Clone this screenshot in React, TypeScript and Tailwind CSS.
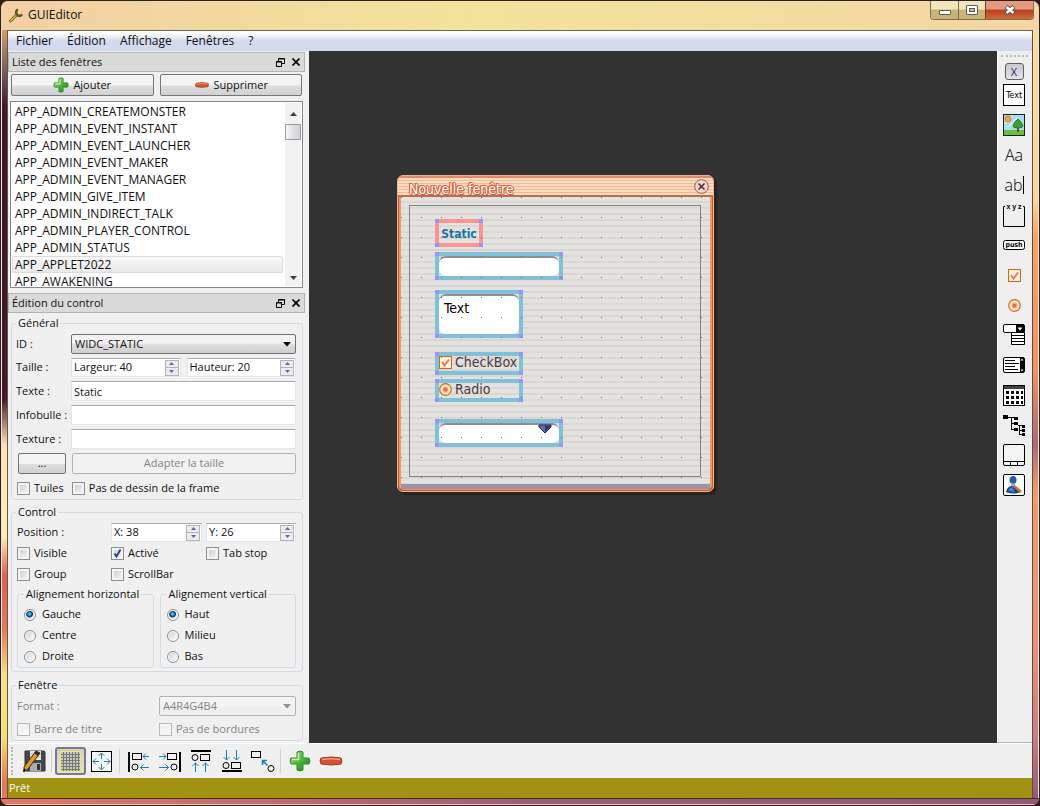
import { useState, type ReactNode } from 'react'
import clsx from 'clsx'

const windows = [
  'APP_ADMIN_CREATEMONSTER',
  'APP_ADMIN_EVENT_INSTANT',
  'APP_ADMIN_EVENT_LAUNCHER',
  'APP_ADMIN_EVENT_MAKER',
  'APP_ADMIN_EVENT_MANAGER',
  'APP_ADMIN_GIVE_ITEM',
  'APP_ADMIN_INDIRECT_TALK',
  'APP_ADMIN_PLAYER_CONTROL',
  'APP_ADMIN_STATUS',
  'APP_APPLET2022',
  'APP_AWAKENING',
]

const menus = ['Fichier', 'Édition', 'Affichage', 'Fenêtres', '?']

/* ---------- icons ---------- */

function PlusIcon({ className }: { className?: string }) {
  return (
    <svg viewBox="0 0 22 22" className={className} aria-hidden="true">
      <defs>
        <linearGradient id="plus" x1="0" y1="0" x2="1" y2="1">
          <stop offset="0" stopColor="#9fe07c" />
          <stop offset="0.5" stopColor="#4fb83a" />
          <stop offset="1" stopColor="#1c7a1c" />
        </linearGradient>
      </defs>
      <path
        d="M8 2q3-2 6 0v6h6q2 3 0 6h-6v6q-3 2-6 0v-6H2q-2-3 0-6h6z"
        fill="url(#plus)"
        stroke="#2f8a2a"
      />
      <path d="M9.500 3v6.500H3" fill="none" stroke="#c8f0b0" strokeWidth="1.500" />
    </svg>
  )
}

function MinusIcon({ className }: { className?: string }) {
  return (
    <svg viewBox="0 0 24 10" className={className} aria-hidden="true">
      <path
        d="M2 2q10-2 20 0 2 3 0 6-10 2-20 0-2-3 0-6z"
        fill="#d2532f"
        stroke="#a8391b"
      />
      <path d="M3 3.500q9-1.500 18 0" fill="none" stroke="#f29a78" strokeWidth="1.500" />
    </svg>
  )
}

function WrenchIcon() {
  return (
    <svg viewBox="0 0 16 16" className="size-4" aria-hidden="true">
      <path
        d="M2.500 14L9 7.500"
        stroke="#7a6a1c"
        strokeWidth="3"
        strokeLinecap="round"
      />
      <path
        d="M2.500 14L9 7.500"
        stroke="#d8b64a"
        strokeWidth="1.300"
        strokeLinecap="round"
      />
      <path
        d="M9 3Q7 6 9 8t4.500 0"
        fill="none"
        stroke="#5f5a1c"
        strokeWidth="2.400"
        strokeLinecap="round"
      />
    </svg>
  )
}

function SaveIcon() {
  return (
    <svg viewBox="0 0 24 24" className="size-6" aria-hidden="true">
      <path d="M3 2h19l1 1v19H4l-1-1z" fill="#474747" stroke="#333" />
      <path d="M8 2h11v9H8z" fill="#e4e9ee" />
      <path d="M8 5h11M8 8h11" stroke="#b9c3cc" />
      <path d="M8 14h11v8H8z" fill="#a9adb2" />
      <path d="M15 15h3v6h-3z" fill="#333" />
      <path d="M14 2l4 2L6 20l-4 3 0-5z" fill="#e79a2c" stroke="#3b2a10" />
      <path d="M14 2l4 2-2 3-4-3z" fill="#2a2a2a" />
      <path d="M2 19l2 2-3 2z" fill="#111" />
    </svg>
  )
}

function GridIcon() {
  return (
    <svg viewBox="0 0 21 21" className="size-[21px]" shapeRendering="crispEdges" aria-hidden="true">
      <rect width="21" height="21" fill="#f1ea5a" />
      <rect x="1" y="1" width="19" height="19" fill="#c9c9c4" />
      <path
        d="M3.500 1v19M6.500 1v19M9.500 1v19M12.500 1v19M15.500 1v19M18.500 1v19M1 3.500h19M1 6.500h19M1 9.500h19M1 12.500h19M1 15.500h19M1 18.500h19"
        stroke="#77777a"
      />
    </svg>
  )
}

function FitIcon() {
  return (
    <svg viewBox="0 0 21 21" className="size-[21px]" fill="none" aria-hidden="true">
      <rect x="0.500" y="0.500" width="20" height="20" fill="#f7f7f7" stroke="#000" />
      <path
        d="M10.500 2v6M10.500 13v6M2 10.500h6M13 10.500h6M7.500 5l3-3 3 3M7.500 16l3 3 3-3M5 7.500l-3 3 3 3M16 7.500l3 3-3 3"
        stroke="#1d7fae"
      />
    </svg>
  )
}

function AlignLeftIcon() {
  return (
    <svg viewBox="0 0 22 21" className="h-[21px] w-[22px]" fill="none" aria-hidden="true">
      <path d="M1 1v20" stroke="#000" strokeWidth="2" />
      <rect x="4.500" y="2.500" width="9" height="6" stroke="#000" />
      <circle cx="7" cy="16" r="3" stroke="#000" />
      <path d="M15 5.500h6M18 2.500l-3 3 3 3M12 16.500h9M15.500 13.500l-3 3 3 3" stroke="#1d7fae" />
    </svg>
  )
}

function AlignRightIcon() {
  return (
    <svg viewBox="0 0 22 21" className="h-[21px] w-[22px]" fill="none" aria-hidden="true">
      <path d="M21 1v20" stroke="#000" strokeWidth="2" />
      <rect x="8.500" y="2.500" width="9" height="6" stroke="#000" />
      <circle cx="15" cy="16" r="3" stroke="#000" />
      <path d="M0 5.500h7M4 2.500l3 3-3 3M0 16.500h10M6.500 13.500l3 3-3 3" stroke="#1d7fae" />
    </svg>
  )
}

function AlignTopIcon() {
  return (
    <svg viewBox="0 0 22 22" className="size-[22px]" fill="none" aria-hidden="true">
      <path d="M1 1h20" stroke="#000" strokeWidth="2" />
      <circle cx="5" cy="7.500" r="3" stroke="#000" />
      <rect x="10.500" y="4.500" width="9" height="6" stroke="#000" />
      <path d="M5.500 12.500V22M2.500 16l3-3 3 3M15.500 12.500V22M12.500 16l3-3 3 3" stroke="#1d7fae" />
    </svg>
  )
}

function AlignBottomIcon() {
  return (
    <svg viewBox="0 0 22 22" className="size-[22px]" fill="none" aria-hidden="true">
      <path d="M1 21h20" stroke="#000" strokeWidth="2" />
      <circle cx="5" cy="15.500" r="3" stroke="#000" />
      <rect x="10.500" y="12.500" width="9" height="6" stroke="#000" />
      <path d="M5.500 0v10M2.500 7l3 3 3-3M15.500 0v10M12.500 7l3 3 3-3" stroke="#1d7fae" />
    </svg>
  )
}

function MoveIcon() {
  return (
    <svg viewBox="0 0 24 22" className="h-[22px] w-6" fill="none" aria-hidden="true">
      <rect x="0.500" y="1.500" width="9" height="6" stroke="#000" />
      <circle cx="20" cy="18.500" r="3" stroke="#000" />
      <path d="M11.500 15v-4.500H16M11.500 10.500l5 5" stroke="#1d7fae" strokeWidth="1.500" />
    </svg>
  )
}

function TextToolIcon() {
  return (
    <svg viewBox="0 0 22 22" className="size-[22px]" aria-hidden="true">
      <rect x="0.500" y="0.500" width="21" height="21" fill="#fff" stroke="#000" />
      <text x="11" y="14" textAnchor="middle" fontSize="9" fontFamily="DejaVu Sans Condensed, sans-serif">
        Text
      </text>
    </svg>
  )
}

function PictureIcon() {
  return (
    <svg viewBox="0 0 22 22" className="size-[22px]" aria-hidden="true">
      <rect x="0.500" y="0.500" width="21" height="21" fill="#a9def2" stroke="#123" />
      <path d="M1 16h20v5H1z" fill="#6bbf3c" />
      <path d="M2 9l7-7M5 13l9-9" stroke="#d4f1fb" strokeWidth="1.500" />
      <circle cx="5" cy="5" r="3" fill="#f4a14a" stroke="#e07b2d" />
      <path d="M15 12v6" stroke="#7a4a1c" strokeWidth="2" />
      <path d="M15 5q4 3 5 7 0 2-5 2t-5-2q1-4 5-7z" fill="#3f9b35" stroke="#2b7426" />
    </svg>
  )
}

function GroupToolIcon() {
  return (
    <svg viewBox="0 0 22 25" className="h-[25px] w-[22px]" fill="none" aria-hidden="true">
      <path d="M2 3.500H.5v20h21v-20H20" stroke="#000" />
      <text
        x="11"
        y="6"
        fill="#000"
        textAnchor="middle"
        fontSize="7"
        fontWeight="700"
        fontFamily="Liberation Sans, sans-serif"
      >
        x y z
      </text>
    </svg>
  )
}

function PushIcon() {
  return (
    <svg viewBox="0 0 22 10" className="h-2.5 w-[22px]" aria-hidden="true">
      <rect x="0.500" y="0.500" width="21" height="9" rx="2" fill="#fff" stroke="#000" />
      <text
        x="11"
        y="7"
        textAnchor="middle"
        fontSize="7"
        fontWeight="700"
        fontFamily="DejaVu Sans Condensed, sans-serif"
      >
        push
      </text>
    </svg>
  )
}

function OrangeCheck() {
  return (
    <svg viewBox="0 0 13 13" className="size-[13px] shrink-0" aria-hidden="true">
      <rect x="0.500" y="0.500" width="12" height="12" fill="#fdf0b0" stroke="#d4622c" />
      <rect x="2" y="2" width="9" height="9" fill="#fff6e4" />
      <path d="M3 6l2.500 3.500L10 3.500" fill="none" stroke="#ee7466" strokeWidth="2" />
    </svg>
  )
}

function OrangeRadio() {
  return (
    <svg viewBox="0 0 13 13" className="size-[13px] shrink-0" aria-hidden="true">
      <circle cx="6.500" cy="6.500" r="5.800" fill="#fdf0b0" stroke="#d9622f" strokeWidth="1.200" />
      <circle cx="6.500" cy="6.500" r="3.500" fill="#fbd9b4" />
      <circle cx="6.500" cy="6.500" r="2.300" fill="#e66a54" />
    </svg>
  )
}

function ComboToolIcon() {
  return (
    <svg viewBox="0 0 22 22" className="size-[22px]" aria-hidden="true">
      <rect x="0.500" y="0.500" width="21" height="8" rx="1.500" fill="#fff" stroke="#000" />
      <path d="M13 0h8v9h-8z" />
      <path d="M14.500 3.500h5L17 6.500z" fill="#fff" />
      <path d="M8.500 8.500h13v12h-13z" fill="#fff" stroke="#000" />
      <path d="M8 11.500h13M8 14.500h13M8 17.500h13" stroke="#000" />
    </svg>
  )
}

function ListToolIcon() {
  return (
    <svg viewBox="0 0 22 16" className="h-4 w-[22px]" aria-hidden="true">
      <rect x="0.500" y="0.500" width="21" height="15" rx="1.500" fill="#fff" stroke="#000" />
      <path d="M2 3.500h10M2 6.500h14M2 9.500h10M2 12.500h13" stroke="#000" />
      <path d="M17 1h4v14h-4z" />
      <path d="M17.500 3.500L19 1.500l1.500 2zM17.500 12.500l1.500 2 1.500-2z" fill="#fff" />
    </svg>
  )
}

function CalendarIcon() {
  return (
    <svg viewBox="0 0 22 21" className="h-[21px] w-[22px]" aria-hidden="true">
      <rect x="0.500" y="0.500" width="21" height="20" fill="#fff" stroke="#000" />
      <path d="M1 1h20v3H1z" fill="#444" />
      <path
        d="M3 7.500h17M3 12.500h17M3 17.500h17"
        stroke="#000"
        strokeWidth="3"
        strokeDasharray="3 2"
      />
    </svg>
  )
}

function TreeIcon() {
  return (
    <svg viewBox="0 0 22 22" className="size-[22px]" shapeRendering="crispEdges" aria-hidden="true">
      <path d="M0 1h5v4H0zM11 3h4v3h-4zM11 8h4v3h-4zM11 14h4v3h-4zM19 11h3v3h-3zM19 15h3v3h-3zM19 19h3v3h-3z" />
      <path
        d="M5 3.500h6M8.500 3.500v12H11M8 9.500h3M15 11.500h4M16.500 11.500v9H19M16 16.500h3"
        fill="none"
        stroke="#000"
      />
    </svg>
  )
}

function TabToolIcon() {
  return (
    <svg viewBox="0 0 22 22" className="size-[22px]" fill="none" stroke="#000" aria-hidden="true">
      <rect x="0.500" y="0.500" width="21" height="21" rx="1.500" fill="#f5f5f5" />
      <path d="M1 17.500h20M7.500 17.500V21M14.500 17.500V21" />
    </svg>
  )
}

function UserIcon() {
  return (
    <svg viewBox="0 0 22 22" className="size-[22px]" aria-hidden="true">
      <rect x="0.500" y="0.500" width="21" height="21" rx="1.500" fill="#fff" stroke="#000" />
      <ellipse cx="10" cy="6" rx="3.500" ry="4" fill="#2a5d9f" />
      <path d="M8 8q2 3 4 1l0 4H8z" fill="#7fb6e0" />
      <path d="M3 18q1-5 5-6l4 1 6 5q-7 3-15 0z" fill="#1d3f8f" />
      <path d="M5 17q1-3 4-4l3 5z" fill="#3f86cc" />
      <path d="M11 12l7 6" stroke="#e06a2c" strokeWidth="2.500" />
    </svg>
  )
}

/* ---------- building blocks ---------- */

function DockTitle({ title }: { title: string }) {
  return (
    <div className="mr-1 flex h-5 items-center border border-[#b3b3b3] bg-[#dadada] pl-[3px]">
      <h2 className="flex-auto">{title}</h2>
      <button type="button" aria-label="Détacher" className="grid size-4 place-items-center">
        <svg viewBox="0 0 9 9" className="size-[9px]" fill="none" stroke="#000">
          <path d="M2.500 3V.5h6v5H6M2 1h7" />
          <path d="M.5 3.500h5v5h-5zM0 4h6" />
        </svg>
      </button>
      <button type="button" aria-label="Fermer" className="grid size-4 place-items-center">
        <svg viewBox="0 0 8 8" className="size-2" stroke="#000" strokeWidth="1.700">
          <path d="M.5.500l7 7M7.500.500l-7 7" />
        </svg>
      </button>
    </div>
  )
}

const buttonStyle =
  'flex items-center justify-center gap-1 rounded-[2px] border border-[#75757a] bg-linear-to-b from-[#f4f4f4] from-50% via-[#dedede] via-55% to-[#d2d0d2]'

function Group({ title, className, children }: { title: string; className?: string; children: ReactNode }) {
  return (
    <fieldset className={clsx('min-w-0 rounded-[3px] border border-[#d3dce3]', className)}>
      <legend className="h-4 px-0.5 leading-4">{title}</legend>
      {children}
    </fieldset>
  )
}

function Check({ label, checked, disabled }: { label: string; checked?: boolean; disabled?: boolean }) {
  return (
    <label className={clsx('flex h-5 items-center gap-1', disabled && 'text-[#858585]')}>
      <span className="grid">
        <input
          type="checkbox"
          defaultChecked={checked}
          disabled={disabled}
          className="peer col-start-1 row-start-1 size-[13px] appearance-none border border-[#8e8f8f] bg-linear-to-br from-[#c4c8ce] to-[#fbfbfb] ring-2 ring-[#f4f4f4] ring-inset disabled:border-[#b9b9b9] disabled:from-[#ececec]"
        />
        <svg
          viewBox="0 0 13 13"
          className="pointer-events-none col-start-1 row-start-1 hidden size-[13px] peer-checked:block"
        >
          <path d="M3.500 6.500l2 3 4-7" fill="none" stroke="#2a3a8c" strokeWidth="1.800" />
        </svg>
      </span>
      {label}
    </label>
  )
}

function Radio({ label, name, checked }: { label: string; name: string; checked?: boolean }) {
  return (
    <label className="flex h-[21px] items-center gap-1.5">
      <input
        type="radio"
        name={name}
        defaultChecked={checked}
        className="size-3 appearance-none rounded-full border border-[#8e8f8f] bg-linear-to-br from-[#cfd2d6] to-white ring-1 ring-white ring-inset checked:bg-[radial-gradient(circle_at_45%_40%,#8fdcf8_0,#1c6ea8_2px,#12395f_3px,#e6eaee_4px)]"
      />
      {label}
    </label>
  )
}

function Spin({ label, value }: { label: string; value: string }) {
  return (
    <div className="flex h-[19px] min-w-0 flex-1 items-center border border-[#e3e6ec] border-t-[#abadb3] bg-white pr-px">
      <input
        aria-label={label}
        defaultValue={value}
        className="w-0 min-w-0 flex-1 pl-0.5 outline-none"
      />
      <span className="flex w-[14px] flex-col">
        <button
          type="button"
          aria-label={`${label} plus`}
          className="grid h-2 place-items-center border border-[#b3b3b8] bg-[#ececee]"
        >
          <svg viewBox="0 0 5 3" className="h-[3px] w-[5px]">
            <path d="M0 3h5L2.500 0z" fill="#5a6aa8" />
          </svg>
        </button>
        <button
          type="button"
          aria-label={`${label} moins`}
          className="grid h-2 place-items-center border border-t-0 border-[#b3b3b8] bg-[#ececee]"
        >
          <svg viewBox="0 0 5 3" className="h-[3px] w-[5px]">
            <path d="M0 0h5L2.500 3z" fill="#5a6aa8" />
          </svg>
        </button>
      </span>
    </div>
  )
}

function Select({ id, value, disabled }: { id: string; value: string; disabled?: boolean }) {
  return (
    <span className="grid flex-1 items-center">
      <select
        id={id}
        disabled={disabled}
        defaultValue={value}
        className="col-start-1 row-start-1 h-5 w-full appearance-none rounded-[2px] border border-[#6f6f74] bg-linear-to-b from-[#f2f2f2] from-45% via-[#dddbdd] via-55% to-[#d0ced0] pl-[3px] disabled:border-[#b3b3b6] disabled:from-[#f4f4f4] disabled:via-[#f0f0f0] disabled:to-[#efefef] disabled:text-[#858585] disabled:opacity-100"
      >
        <option>{value}</option>
      </select>
      <svg
        viewBox="0 0 8 5"
        className={clsx(
          'pointer-events-none col-start-1 row-start-1 mr-[5px] h-[5px] w-2 justify-self-end',
          disabled ? 'fill-[#8f8f96]' : 'fill-black',
        )}
      >
        <path d="M0 0h8L4 4.500z" />
      </svg>
    </span>
  )
}

function Field({ id, label, value }: { id: string; label: string; value?: string }) {
  return (
    <div className="flex h-5 items-center">
      <label htmlFor={id} className="w-[55px] shrink-0">
        {label}
      </label>
      <input
        id={id}
        defaultValue={value}
        className="h-5 min-w-0 flex-1 border border-[#e3e6ec] border-t-[#abadb3] bg-white pl-0.5 outline-none"
      />
    </div>
  )
}

/* ---------- docks ---------- */

function WindowList() {
  const [selected, setSelected] = useState('APP_APPLET2022')

  return (
    <section>
      <DockTitle title="Liste des fenêtres" />
      <div className="mt-0.5 mr-[7px] ml-[3px] flex gap-1.5">
        <button type="button" className={clsx(buttonStyle, 'h-[22px] flex-1')}>
          <PlusIcon className="size-4" />
          Ajouter
        </button>
        <button type="button" className={clsx(buttonStyle, 'h-[22px] flex-1')}>
          <MinusIcon className="h-1.5 w-4" />
          Supprimer
        </button>
      </div>
      <div className="mt-[5px] mr-1.5 ml-0.5 flex h-[187px] border border-[#828790] bg-white">
        <ul className="flex-auto overflow-hidden py-px pr-px pl-px text-xs">
          {windows.map((name) => (
            <li key={name}>
              <button
                type="button"
                onClick={() => setSelected(name)}
                className={clsx(
                  'block h-[17px] w-full rounded-[2px] px-[3px] text-left leading-[17px]',
                  name === selected &&
                    'bg-linear-to-b from-[#fafafa] to-[#e8e8e8] ring-1 ring-[#dcdcdc] ring-inset',
                )}
              >
                {name}
              </button>
            </li>
          ))}
        </ul>
        <div className="m-px flex w-4 flex-col bg-[#f2f2f2]">
          <button type="button" aria-label="Monter" className="grid h-[21px] place-items-center">
            <svg viewBox="0 0 7 4" className="h-1 w-[7px]">
              <path d="M0 4h7L3.500 0z" fill="#404040" />
            </svg>
          </button>
          <div className="h-4 rounded-[1px] border border-[#9a9a9e] bg-linear-to-r from-[#f6f6f6] to-[#cfcfd3]" />
          <button type="button" aria-label="Descendre" className="mt-auto grid h-4 place-items-center">
            <svg viewBox="0 0 7 4" className="h-1 w-[7px]">
              <path d="M0 0h7L3.500 4z" fill="#404040" />
            </svg>
          </button>
        </div>
      </div>
    </section>
  )
}

function ControlEditor() {
  return (
    <section className="mt-[5px]">
      <DockTitle title="Édition du control" />
      <div className="mt-0.5 mr-1.5 ml-[3px] flex flex-col gap-1">
        <Group title="Général" className="pr-1.5 pb-px pl-1">
          <div className="mt-[3px] flex flex-col gap-1">
            <div className="flex items-center">
              <label htmlFor="control-id" className="w-[55px] shrink-0">
                ID :
              </label>
              <Select id="control-id" value="WIDC_STATIC" />
            </div>
            <div className="flex items-center">
              <span className="w-[55px] shrink-0">Taille :</span>
              <div className="flex flex-1 gap-1.5">
                <Spin label="Largeur" value="Largeur: 40" />
                <Spin label="Hauteur" value="Hauteur: 20" />
              </div>
            </div>
            <Field id="text" label="Texte :" value="Static" />
            <Field id="tooltip" label="Infobulle :" />
            <Field id="texture" label="Texture :" />
            <div className="flex gap-1.5 pl-0.5">
              <button type="button" className={clsx(buttonStyle, 'h-[21px] w-12')}>
                ...
              </button>
              <button
                type="button"
                disabled
                className="h-[21px] flex-1 rounded-[2px] border border-[#b3b3b6] bg-[#f2f2f2] text-[#858585]"
              >
                Adapter la taille
              </button>
            </div>
            <div className="flex gap-2 pl-px">
              <Check label="Tuiles" />
              <Check label="Pas de dessin de la frame" />
            </div>
          </div>
        </Group>

        <Group title="Control" className="pr-1.5 pb-[3px] pl-1">
          <div className="mt-[3px] grid grid-cols-[94px_95px_1fr] items-center gap-y-px pl-px">
            <span>Position :</span>
            <div className="mr-1 flex">
              <Spin label="X" value="X: 38" />
            </div>
            <div className="flex">
              <Spin label="Y" value="Y: 26" />
            </div>
            <Check label="Visible" />
            <Check label="Activé" checked />
            <Check label="Tab stop" />
            <Check label="Group" />
            <Check label="ScrollBar" />
          </div>
          <div className="mt-0.5 grid grid-cols-2 gap-1.5 pl-px">
            <Group title="Alignement horizontal" className="pt-0.5 pl-1.5">
              <Radio name="horizontal" label="Gauche" checked />
              <Radio name="horizontal" label="Centre" />
              <Radio name="horizontal" label="Droite" />
            </Group>
            <Group title="Alignement vertical" className="pt-0.5 pl-1.5">
              <Radio name="vertical" label="Haut" checked />
              <Radio name="vertical" label="Milieu" />
              <Radio name="vertical" label="Bas" />
            </Group>
          </div>
        </Group>

        <Group title="Fenêtre" className="mt-px pr-1.5 pb-px pl-1">
          <div className="mt-[3px] grid grid-cols-[142px_1fr] items-center gap-y-[3px] pl-px">
            <label htmlFor="format" className="text-[#858585]">
              Format :
            </label>
            <Select id="format" value="A4R4G4B4" disabled />
            <Check label="Barre de titre" disabled />
            <Check label="Pas de bordures" disabled />
          </div>
        </Group>
      </div>
    </section>
  )
}

/* ---------- canvas ---------- */

function Handles({ className, selected, children }: { className: string; selected?: boolean; children: ReactNode }) {
  return (
    <div className={clsx('absolute border-4', selected ? 'border-[#fa9492]' : 'border-[#80c0d8]', className)}>
      {children}
      <i className="absolute -top-1 -left-1 size-1 bg-[#9696fa]" />
      <i className="absolute -top-1 -right-1 size-1 bg-[#9696fa]" />
      <i className="absolute -bottom-1 -left-1 size-1 bg-[#9696fa]" />
      <i className="absolute -right-1 -bottom-1 size-1 bg-[#9696fa]" />
    </div>
  )
}

const whiteBox = 'h-full w-full rounded-[7px] border-t-2 border-[#938d92] bg-white'

function EditedWindow() {
  return (
    <div className="absolute top-[124px] left-[88px] h-[317px] w-[317px] overflow-hidden rounded-md border border-[#f2b293] bg-[#c95a2b] font-['DejaVu_Sans_Condensed','Noto_Sans',sans-serif] text-sm text-[#4a3a3e] shadow-[3px_3px_1px_#29231f]">
      <div className="absolute inset-px rounded-[5px] border-2 border-[#e89a72] bg-[repeating-linear-gradient(180deg,#e2e2df_0,#e2e2df_4px,#dcd4d5_4px,#dcd4d5_6px)]" />
      <div className="absolute inset-x-[3px] bottom-[2px] h-[5px] bg-[#9c93a3]" />
      <div className="absolute inset-x-0 top-0 flex h-[21px] items-center justify-between border-t-2 border-b-2 border-t-[#e08a68] border-b-[#c4694a] bg-[repeating-linear-gradient(180deg,#fbdcc0_0,#fbdcc0_2px,#f0b998_2px,#f0b998_3px)] pt-1 pr-1 pl-[11px]">
        <h2 className="leading-4 text-white [text-shadow:1px_0_#d2603a,-1px_0_#d2603a,0_1px_#d2603a,0_-1px_#d2603a,1px_1px_#d2603a,-1px_-1px_#d2603a]">
          Nouvelle fenêtre
        </h2>
        <button type="button" aria-label="Fermer la fenêtre" className="-mt-1">
          <svg viewBox="0 0 15 15" className="size-[15px]">
            <circle cx="7.500" cy="7.500" r="6.800" fill="#f3d6cb" stroke="#9a584c" />
            <path d="M4.500 4.500l6 6M10.500 4.500l-6 6" stroke="#3c2a2c" strokeWidth="1.500" />
          </svg>
        </button>
      </div>
      <div className="absolute top-[29px] left-[11px] h-[272px] w-[292px] border border-[#838383]" />

      <Handles className="top-[43px] left-[37px] h-7 w-12 text-center leading-5 font-bold text-[#1874a8]" selected>
        <span className="text-xs">Static</span>
      </Handles>
      <Handles className="top-[76px] left-[37px] h-7 w-32">
        <input aria-label="Zone de saisie" className={clsx(whiteBox, 'block outline-none')} />
      </Handles>
      <Handles className="top-[114px] left-[37px] h-12 w-[88px]">
        <textarea
          aria-label="Zone de texte"
          defaultValue="Text"
          className={clsx(whiteBox, 'block resize-none overflow-hidden pt-0.5 pl-[5px] leading-5 text-black outline-none')}
        />
      </Handles>
      <Handles className="top-[176px] left-[37px] h-[23px] w-[88px]">
        <label className="flex h-[13px] items-center gap-[3px] leading-[13px]">
          <input type="checkbox" defaultChecked className="sr-only" />
          <OrangeCheck />
          CheckBox
        </label>
      </Handles>
      <Handles className="top-[203px] left-[37px] h-[23px] w-[88px]">
        <label className="flex h-[13px] items-center gap-[3px] leading-[13px]">
          <input type="radio" defaultChecked className="sr-only" />
          <OrangeRadio />
          Radio
        </label>
      </Handles>
      <Handles className="top-[243px] left-[37px] h-7 w-32">
        <select aria-label="Liste déroulante" className={clsx(whiteBox, 'block appearance-none')} />
        <svg viewBox="0 0 14 10" className="pointer-events-none absolute top-px right-[7px] h-2.5 w-3.5">
          <path d="M1 1h12v2L7 9 1 3z" fill="#6468b4" stroke="#23234f" />
          <path d="M7 2h5v1L7 8z" fill="#35377c" />
        </svg>
      </Handles>
      {/* design grid, one dot every 20px */}
      <div className="pointer-events-none absolute inset-x-0 top-[21px] bottom-1.5 bg-[conic-gradient(from_270deg_at_1px_1px,#6f6f6f_25%,transparent_0)] bg-size-[20px_20px] bg-position-[3px_0px]" />
    </div>
  )
}

/* ---------- tool bars ---------- */

function Tool({ label, active, children }: { label: string; active?: boolean; children: ReactNode }) {
  return (
    <button
      type="button"
      aria-label={label}
      className={clsx(
        'grid h-7 w-[31px] place-items-center rounded-[3px]',
        active && 'border-2 border-[#7c7984] bg-linear-to-b from-[#cfcdd3] to-[#e0dfe3]',
      )}
    >
      {children}
    </button>
  )
}

function Separator() {
  return <span className="mx-[2px] h-6 w-0.5 border-l border-[#d2d2d2]" />
}

const palette = [
  { label: 'Texte', icon: <TextToolIcon /> },
  { label: 'Image', icon: <PictureIcon /> },
  { label: 'Static', icon: <span className="text-base font-light text-black">Aa</span> },
  { label: 'Edit', icon: <span className="border-r border-black text-base leading-[18px] font-light text-black">ab</span> },
  { label: 'Groupe', icon: <GroupToolIcon /> },
  { label: 'Bouton', icon: <PushIcon /> },
  { label: 'Case à cocher', icon: <OrangeCheck /> },
  { label: 'Bouton radio', icon: <OrangeRadio /> },
  { label: 'Combo', icon: <ComboToolIcon /> },
  { label: 'Liste', icon: <ListToolIcon /> },
  { label: 'Calendrier', icon: <CalendarIcon /> },
  { label: 'Arbre', icon: <TreeIcon /> },
  { label: 'Onglets', icon: <TabToolIcon /> },
  { label: 'Personnage', icon: <UserIcon /> },
]

function Palette() {
  return (
    <div className="flex w-[35px] shrink-0 flex-col items-center border-b border-l border-b-[#b5b5b5] border-l-white bg-[#efefef] pr-0.5">
      <div className="mt-1 w-[27px] border-t-2 border-dotted border-[#b8b8b8]" />
      <button
        type="button"
        className="mt-1.5 h-[17px] w-[19px] rounded-[3px] border border-[#5f5f64] bg-linear-to-b from-[#c9c9cd] to-[#e4e4e6] leading-[14px] text-[#1b2a6b]"
      >
        X
      </button>
      {palette.map((tool) => (
        <button key={tool.label} type="button" aria-label={tool.label} className="grid h-[30px] w-8 place-items-center">
          {tool.icon}
        </button>
      ))}
    </div>
  )
}

function BottomBar() {
  return (
    <div className="flex h-[35px] items-center border-t border-white bg-[#f0f0f0]">
      <span className="mr-[5px] ml-[3px] h-7 w-0.5 border-l-2 border-dotted border-[#b8b8b8]" />
      <Tool label="Enregistrer">
        <SaveIcon />
      </Tool>
      <Separator />
      <Tool label="Grille" active>
        <GridIcon />
      </Tool>
      <Tool label="Ajuster">
        <FitIcon />
      </Tool>
      <Separator />
      <Tool label="Aligner à gauche">
        <AlignLeftIcon />
      </Tool>
      <Tool label="Aligner à droite">
        <AlignRightIcon />
      </Tool>
      <Tool label="Aligner en haut">
        <AlignTopIcon />
      </Tool>
      <Tool label="Aligner en bas">
        <AlignBottomIcon />
      </Tool>
      <Tool label="Déplacer">
        <MoveIcon />
      </Tool>
      <Separator />
      <Tool label="Ajouter">
        <PlusIcon className="size-[22px]" />
      </Tool>
      <Tool label="Supprimer">
        <MinusIcon className="h-2.5 w-6" />
      </Tool>
    </div>
  )
}

function TitleBar() {
  return (
    <header className="flex h-[29px] items-start bg-linear-to-r from-[#f3cfa4] via-[#f3e39a] via-45% to-[#f4d6a4] pl-[7px]">
      <div className="flex h-7 flex-auto items-center gap-1 text-xs">
        <WrenchIcon />
        <h1>GUIEditor</h1>
      </div>
      <div className="mr-[5px] flex h-[19px] overflow-hidden rounded-b-[4px] border border-t-0 border-[#7a6d52]">
        <button
          type="button"
          aria-label="Réduire"
          className="grid w-7 place-items-center border-r border-[#7a6d52] bg-linear-to-b from-[#f3e6bc] from-45% to-[#c9b573] to-50%"
        >
          <span className="mt-1 h-[5px] w-3 rounded-[1px] border border-[#5b5b5b] bg-white" />
        </button>
        <button
          type="button"
          aria-label="Agrandir"
          className="grid w-[27px] place-items-center border-r border-[#7a3626] bg-linear-to-b from-[#f3e6bc] from-45% to-[#c9b573] to-50%"
        >
          <span className="grid h-2.5 w-3 place-items-center rounded-[1px] border border-[#5b5b5b] bg-white">
            <span className="h-1 w-1.5 border border-[#5b5b5b] bg-[#cdbb80]" />
          </span>
        </button>
        <button
          type="button"
          aria-label="Fermer"
          className="grid w-[47px] place-items-center bg-linear-to-b from-[#e39a80] from-45% via-[#bb3a1c] via-50% to-[#cf6b3c]"
        >
          <svg viewBox="0 0 12 10" className="h-2.5 w-3">
            <path d="M2 1.500l8 7M10 1.500l-8 7" stroke="#54545c" strokeWidth="4.500" />
            <path d="M2.500 2l7 6M9.500 2l-7 6" stroke="#fff" strokeWidth="2.500" />
          </svg>
        </button>
      </div>
    </header>
  )
}

export default function App() {
  return (
    <div className="bg-[#2c1c1c]">
      <div className="flex min-h-screen flex-col overflow-hidden rounded-lg border border-[#2b2220] bg-[#c37a78] font-['Open_Sans','Noto_Sans',sans-serif] text-[11px] text-[#101010]">
        <TitleBar />
        <div className="flex flex-auto">
          <div className="w-[7px] shrink-0 border-x border-l-[#f7dfd8] border-r-[#6b5638] bg-[linear-gradient(180deg,#d49a6e_0,#6c5560_6%,#3c1a30_10%,#43182c_48%,#fbe3b4_54%,#fdeebb_66%,#d9605a_71%,#e07a5c_78%,#f4e282_84%,#f3e36c_92%,#e27a5c_98%)]" />
          <div className="flex min-w-0 flex-auto flex-col">
            <nav className="flex h-[21px] items-center gap-3.5 border-t border-[#6d6650] bg-linear-to-b from-white from-10% via-[#e4e9f5] via-35% to-[#d3daee] to-50% pl-2 text-xs">
              {menus.map((menu) => (
                <button key={menu} type="button">
                  {menu}
                </button>
              ))}
            </nav>
            <div className="flex flex-auto">
              <aside className="w-[301px] shrink-0 bg-[#f0f0f0] pt-px pb-0.5">
                <WindowList />
                <ControlEditor />
              </aside>
              <main className="relative min-w-0 flex-auto bg-[#323232]">
                <EditedWindow />
              </main>
              <Palette />
            </div>
            <BottomBar />
            <footer className="flex h-5 items-center bg-[#a29213] px-px text-white">Prêt</footer>
          </div>
          <div className="w-[7px] shrink-0 border-x border-l-[#6b4a30] border-r-[#fbe0cc] bg-[linear-gradient(180deg,#f4dca8_0,#f5d9a0_22%,#f0a468_27%,#ec9668_44%,#a86a80_54%,#e8a070_60%,#e89080_80%,#c4808a_92%,#8f5b78)]" />
        </div>
        <div className="h-[7px] border-y border-t-[#4a2a2a] border-b-[#f3c4bc] bg-linear-to-r from-[#e27a62] via-[#9c5f78] via-50% to-[#8f5b78]" />
      </div>
    </div>
  )
}
